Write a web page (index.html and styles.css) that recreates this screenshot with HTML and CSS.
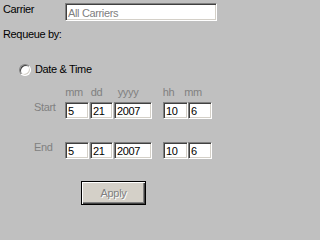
FILE: index.html
```html
<!DOCTYPE html>
<html>
<head>
<meta charset="utf-8">
<link rel="stylesheet" href="styles.css">
</head>
<body>
<div class="panel">
  <div class="carrier-row">
    <span class="carrier-label">Carrier</span>
    <input class="field carrier-field" type="text" value="All Carriers" readonly>
  </div>
  <div class="requeue">Requeue by:</div>
  <div class="radio-row">
    <span class="radio"></span>
    <span class="radio-text">Date &amp; Time</span>
  </div>
  <div class="grid-row heads">
    <span class="row-label"></span>
    <span class="c1">mm</span>
    <span class="c2">dd</span>
    <span class="c3">yyyy</span>
    <span class="c4">hh</span>
    <span class="c5">mm</span>
  </div>
  <div class="grid-row start">
    <span class="row-label">Start</span>
    <input class="field c1" type="text" value="5" readonly>
    <input class="field c2" type="text" value="21" readonly>
    <input class="field c3" type="text" value="2007" readonly>
    <input class="field c4" type="text" value="10" readonly>
    <input class="field c5" type="text" value="6" readonly>
  </div>
  <div class="grid-row end">
    <span class="row-label">End</span>
    <input class="field c1" type="text" value="5" readonly>
    <input class="field c2" type="text" value="21" readonly>
    <input class="field c3" type="text" value="2007" readonly>
    <input class="field c4" type="text" value="10" readonly>
    <input class="field c5" type="text" value="6" readonly>
  </div>
  <div class="button-row">
    <button class="apply" type="button">Apply</button>
  </div>
</div>
</body>
</html>
```
FILE: styles.css
```css
html, body {
  margin: 0;
  padding: 0;
  background: #c0c0c0;
  width: 222px;
  height: 208px;
  overflow: hidden;
}
.panel {
  font-family: "Liberation Sans", Arial, sans-serif;
  font-size: 11px;
  line-height: 13px;
  letter-spacing: -0.35px;
  color: #000;
}
.field {
  box-sizing: border-box;
  margin: 0;
  padding: 0;
  background: #fff;
  border: 1px solid;
  border-color: #808080 #fff #fff #808080;
  box-shadow: inset 1px 1px 0 #404040, inset -1px -1px 0 #d4d0c8;
  font-family: "Liberation Sans", Arial, sans-serif;
  font-size: 11px;
  line-height: 13px;
  letter-spacing: -0.35px;
  color: #000;
  outline: none;
  padding-left: 2px;
}
.carrier-row {
  display: flex;
  align-items: flex-start;
  padding: 3px 0 0 3px;
}
.carrier-label {
  width: 62px;
}
.carrier-field {
  width: 152px;
  height: 18px;
  color: #808080;
  padding-top: 1px;
}
.requeue {
  margin: 7px 0 0 3px;
}
.radio-row {
  display: flex;
  align-items: flex-start;
  margin: 22px 0 0 19px;
}
.radio {
  box-sizing: border-box;
  width: 12px;
  height: 12px;
  margin-top: 1px;
  border-radius: 50%;
  background: #fff;
  border: 1px solid;
  border-color: #808080 #fff #fff #808080;
  box-shadow: inset 1px 1px 0 #404040, inset -1px -1px 0 #d4d0c8;
}
.radio-text {
  margin-left: 4px;
}
.grid-row {
  display: flex;
  align-items: flex-start;
}
.row-label {
  box-sizing: border-box;
  width: 65px;
  padding-left: 34px;
  color: #808080;
}
.heads {
  margin-top: 10px;
  color: #808080;
}
.heads span {
  text-align: center;
}
.start {
  margin-top: 3px;
}
.end {
  margin-top: 23px;
}
.grid-row .row-label {
  margin-top: -1px;
}
.heads .row-label {
  margin-top: 0;
}
.c1 { width: 24px; }
.c2 { width: 23px; margin-left: 1px; }
.c3 { width: 38px; margin-left: 1px; }
.c4 { width: 25px; margin-left: 11px; }
.c5 { width: 24px; }
.heads .c1 { margin-left: -3px; }
.heads .c2 { margin-left: -1px; }
.heads .c4 { margin-left: 9px; }
.heads .c5 { margin-left: 0; }
input.field { height: 17px; }
input.carrier-field { height: 18px; }
.button-row {
  margin: 22px 0 0 81px;
}
.apply {
  box-sizing: border-box;
  width: 65px;
  height: 24px;
  margin: 0;
  padding: 0;
  background: #d4d0c8;
  border: 1px solid #000;
  box-shadow: inset 1px 1px 0 #fff, inset -1px -1px 0 #404040, inset -2px -2px 0 #808080;
  font-family: "Liberation Sans", Arial, sans-serif;
  font-size: 11px;
  letter-spacing: -0.35px;
  color: #808080;
  text-shadow: 1px 1px 0 #fff;
}
```
